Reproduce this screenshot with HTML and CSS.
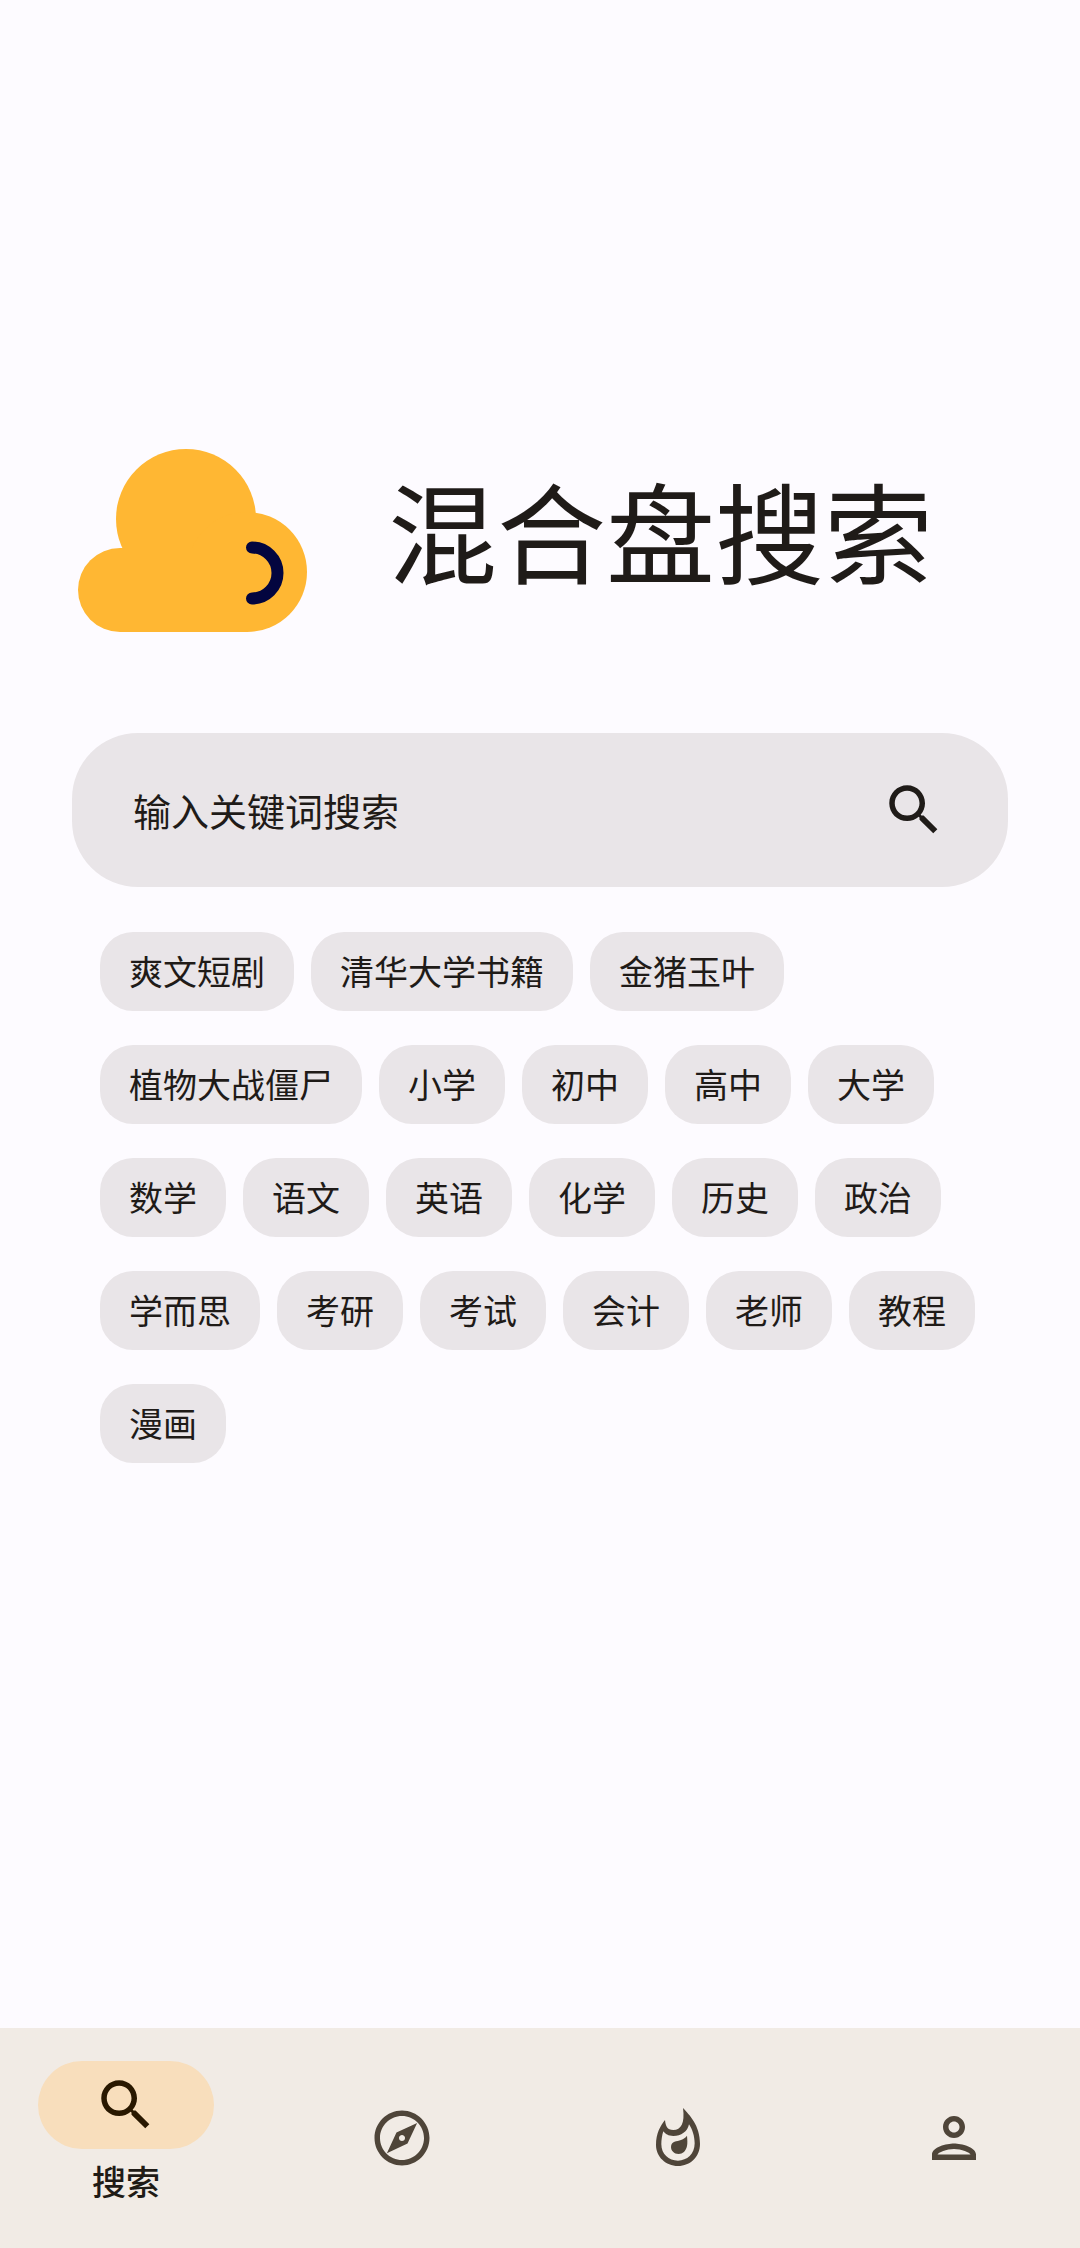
FILE: index.html
```html
<!DOCTYPE html>
<html lang="zh-CN">
  <head>
    <meta charset="UTF-8" />
    <meta name="viewport" content="width=device-width, initial-scale=1.0" />
    <title>混合盘搜索</title>
    <link rel="stylesheet" href="styles.css">
  </head>
  <body>
    <main class="main">
      <header class="brand">
        <svg class="logo" viewBox="0 0 230 184" aria-hidden="true">
          <g fill="#ffb733">
            <circle cx="108" cy="70" r="70" />
            <circle cx="42" cy="141" r="42" />
            <circle cx="169" cy="123" r="60" />
            <path d="M42 99h127v84H42z" />
          </g>
          <path d="M174 98.500a25.500 25.500 0 0 1 0 51" fill="none" stroke="#03053f" stroke-width="12" stroke-linecap="round" />
        </svg>
        <h1 class="title">混合盘搜索</h1>
      </header>

      <form class="search">
        <input class="search-input" type="text" placeholder="输入关键词搜索" aria-label="输入关键词搜索" />
        <button class="search-btn" type="submit" aria-label="搜索">
          <svg class="icon" viewBox="0 0 24 24" aria-hidden="true">
            <path d="M15.5 14h-.79l-.28-.27C15.41 12.59 16 11.11 16 9.5 16 5.91 13.09 3 9.5 3S3 5.91 3 9.5 5.91 16 9.5 16c1.61 0 3.09-.59 4.23-1.57l.27.28v.79l5 4.99L20.49 19l-4.99-5zm-6 0C7.01 14 5 11.99 5 9.5S7.01 5 9.5 5 14 7.01 14 9.5 11.99 14 9.5 14z" />
          </svg>
        </button>
      </form>

      <div class="chips">
        <button class="chip">爽文短剧</button>
        <button class="chip">清华大学书籍</button>
        <button class="chip">金猪玉叶</button>
        <button class="chip">植物大战僵尸</button>
        <button class="chip">小学</button>
        <button class="chip">初中</button>
        <button class="chip">高中</button>
        <button class="chip">大学</button>
        <button class="chip">数学</button>
        <button class="chip">语文</button>
        <button class="chip">英语</button>
        <button class="chip">化学</button>
        <button class="chip">历史</button>
        <button class="chip">政治</button>
        <button class="chip">学而思</button>
        <button class="chip">考研</button>
        <button class="chip">考试</button>
        <button class="chip">会计</button>
        <button class="chip">老师</button>
        <button class="chip">教程</button>
        <button class="chip">漫画</button>
      </div>
    </main>

    <nav class="nav">
      <a class="nav-item active" href="#search">
        <span class="nav-pill">
          <svg class="icon" viewBox="0 0 24 24" aria-hidden="true">
            <path d="M15.5 14h-.79l-.28-.27C15.41 12.59 16 11.11 16 9.5 16 5.91 13.09 3 9.5 3S3 5.91 3 9.5 5.91 16 9.5 16c1.61 0 3.09-.59 4.23-1.57l.27.28v.79l5 4.99L20.49 19l-4.99-5zm-6 0C7.01 14 5 11.99 5 9.5S7.01 5 9.5 5 14 7.01 14 9.5 11.99 14 9.5 14z" />
          </svg>
        </span>
        <span class="nav-label">搜索</span>
      </a>
      <a class="nav-item" href="#explore" aria-label="发现">
        <svg class="icon" viewBox="0 0 24 24" aria-hidden="true">
          <path d="M12 2C6.48 2 2 6.48 2 12s4.48 10 10 10 10-4.48 10-10S17.52 2 12 2zm0 18c-4.41 0-8-3.59-8-8s3.59-8 8-8 8 3.59 8 8-3.59 8-8 8zm-5.5-2.5l7.51-3.49L17.5 6.5 9.99 9.99 6.5 17.5zm5.5-6.6c.61 0 1.1.49 1.1 1.1s-.49 1.1-1.1 1.1-1.1-.49-1.1-1.1.49-1.1 1.1-1.1z" />
        </svg>
      </a>
      <a class="nav-item" href="#hot" aria-label="热门">
        <svg class="icon" viewBox="42 45 198 198" aria-hidden="true">
          <path fill-rule="evenodd" d="M156 54C175 75 207 105 207 162C207 200 178 228 141 228C104 228 75 200 75 165C75 130 88 108 102 90C104 108 108 120 127 120C150 120 162 100 156 54ZM174 103C170 125 150 138 127 138C112 138 103 132 97 124C93 136 91 150 91 163C91 192 113 212 141 212C168 212 191 192 191 160C191 138 184 118 174 103Z" />
          <path d="M168 137C169 150 170 158 168 168C165 183 155 192 143 192C129 192 120 182 120 171C120 152 138 155 150 150C158 147 163 143 168 137Z" />
        </svg>
      </a>
      <a class="nav-item" href="#me" aria-label="我的">
        <svg class="icon" viewBox="0 0 24 24" aria-hidden="true">
          <path d="M12 6c1.1 0 2 .9 2 2s-.9 2-2 2-2-.9-2-2 .9-2 2-2m0 10c2.7 0 5.8 1.29 6 2H6c.23-.72 3.31-2 6-2m0-12C9.79 4 8 5.79 8 8s1.79 4 4 4 4-1.79 4-4-1.79-4-4-4zm0 10c-2.67 0-8 1.34-8 4v2h16v-2c0-2.66-5.33-4-8-4z" />
        </svg>
      </a>
    </nav>
  </body>
</html>
```

FILE: styles.css
```css
* {
  box-sizing: border-box;
}
body {
  margin: 0;
  min-height: 100vh;
  display: flex;
  flex-direction: column;
  background: #fdfbff;
  color: #1f1b18;
  font-family: "Noto Sans CJK SC", sans-serif;
}
button,
input {
  border: 0;
  font-family: inherit;
  color: inherit;
}
.icon {
  display: block;
  width: 66px;
  height: 66px;
  fill: currentColor;
}

/* ------------ main ------------ */
.main {
  flex: 1;
  padding: 449px 72px 48px;
}
.brand {
  display: flex;
  align-items: flex-start;
  gap: 80px;
  padding-left: 6px;
  margin-bottom: 100px;
}
.logo {
  width: 230px;
  height: 184px;
}
.title {
  margin: 0;
  font-size: 109px;
  line-height: 160px;
  font-weight: 400;
}
.search {
  display: flex;
  align-items: center;
  padding: 44px 61px;
  border-radius: 66px;
  background: #e9e5e8;
}
.search-input {
  flex: 1;
  min-width: 0;
  padding: 0;
  background: none;
  font-size: 38px;
  line-height: 56px;
  outline: none;
}
.search-input::placeholder {
  color: inherit;
  opacity: 1;
}
.search-btn {
  padding: 0;
  background: none;
  cursor: pointer;
}
.chips {
  display: flex;
  flex-wrap: wrap;
  gap: 34px 17px;
  padding: 45px 28px 0;
}
.chip {
  padding: 0 29px 2px;
  border-radius: 33px;
  background: #e9e5e8;
  font-size: 34px;
  line-height: 77px;
  cursor: pointer;
}

/* ------------ bottom nav ------------ */
.nav {
  display: grid;
  grid-template-columns: repeat(4, 1fr);
  gap: 24px;
  padding: 33px 0;
  background: #f1ebe5;
}
.nav-item {
  display: flex;
  flex-direction: column;
  align-items: center;
  justify-content: center;
  color: #4f4539;
  text-decoration: none;
}
.nav-item.active {
  color: #1f1b16;
}
.nav-pill {
  padding: 11px 55px;
  border-radius: 44px;
  background: #f8debc;
  color: #291800;
}
.nav-label {
  padding-bottom: 2px;
  font-size: 34px;
  line-height: 64px;
  font-weight: 500;
}
```
